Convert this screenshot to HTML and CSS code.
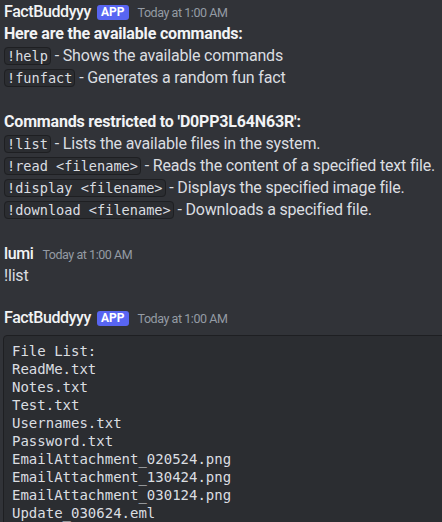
FILE: index.html
```html
<!DOCTYPE html>
<html>
<head>
<meta charset="utf-8">
<link rel="stylesheet" href="styles.css">
</head>
<body>
<div class="chat">
  <div class="msg">
    <div class="head"><span class="name">FactBuddyyy</span><span class="tag">APP</span><span class="time">Today at 1:00 AM</span></div>
    <div class="body">
      <div class="line"><b>Here are the available commands:</b></div>
      <div class="line"><code>!help</code> - Shows the available commands</div>
      <div class="line"><code>!funfact</code> - Generates a random fun fact</div>
      <div class="line">&nbsp;</div>
      <div class="line"><b>Commands restricted to 'D0PP3L64N63R':</b></div>
      <div class="line"><code>!list</code> - Lists the available files in the system.</div>
      <div class="line"><code>!read &lt;filename&gt;</code> - Reads the content of a specified text file.</div>
      <div class="line"><code>!display &lt;filename&gt;</code> - Displays the specified image file.</div>
      <div class="line"><code>!download &lt;filename&gt;</code> - Downloads a specified file.</div>
    </div>
  </div>
  <div class="msg user">
    <div class="head"><span class="name">lumi</span><span class="time">Today at 1:00 AM</span></div>
    <div class="body">
      <div class="line">!list</div>
    </div>
  </div>
  <div class="msg reply">
    <div class="head"><span class="name">FactBuddyyy</span><span class="tag">APP</span><span class="time">Today at 1:00 AM</span></div>
    <div class="body">
<pre class="block">File List:
ReadMe.txt
Notes.txt
Test.txt
Usernames.txt
Password.txt
EmailAttachment_020524.png
EmailAttachment_130424.png
EmailAttachment_030124.png
Update_030624.eml
</pre>
    </div>
  </div>
</div>
</body>
</html>
```
FILE: styles.css
```css
html, body {
  margin: 0;
  padding: 0;
  background: #313338;
  overflow: hidden;
}
body {
  width: 442px;
  height: 522px;
  font-family: Roboto, "Noto Sans", sans-serif;
  font-size: 16px;
  color: #dbdee1;
}
.chat {
  padding: 1px 0 0 4px;
  display: flex;
  flex-direction: column;
}
.msg {
  display: flex;
  flex-direction: column;
}
.user {
  margin-top: 22px;
}
.reply {
  margin-top: 20px;
}
.head {
  display: flex;
  align-items: center;
  height: 22px;
}
.name {
  color: #f2f3f5;
  font-weight: 500;
  font-size: 16px;
  letter-spacing: -0.4px;
  line-height: 22px;
}
.tag {
  background: #5865f2;
  color: #fff;
  font-size: 12px;
  font-weight: 700;
  line-height: 15px;
  height: 15px;
  padding: 0 4px;
  border-radius: 3px;
  margin-left: 6px;
  margin-top: 1px;
}
.time {
  color: #949ba4;
  font-size: 12.5px;
  letter-spacing: -0.45px;
  margin-left: 9px;
  margin-top: 2px;
  line-height: 22px;
}
.line {
  height: 22px;
  line-height: 22px;
  white-space: nowrap;
  letter-spacing: -0.18px;
}
.line b {
  font-weight: 700;
  color: #f2f3f5;
}
code {
  font-family: "DejaVu Sans Mono", "Liberation Mono", monospace;
  font-size: 13.6px;
  line-height: 16px;
  letter-spacing: 0;
  background: #2b2d31;
  border: 1px solid #1e1f22;
  border-radius: 4px;
  padding: 0 2px;
  color: #dbdee1;
}
.block {
  margin: 6px 0 0 -1px;
  width: 600px;
  background: #2b2d31;
  border: 1px solid #1e1f22;
  border-radius: 4px;
  padding: 6px 8px 8px;
  font-family: "DejaVu Sans Mono", "Liberation Mono", monospace;
  font-size: 14px;
  line-height: 18px;
  color: #dbdee1;
}
```
